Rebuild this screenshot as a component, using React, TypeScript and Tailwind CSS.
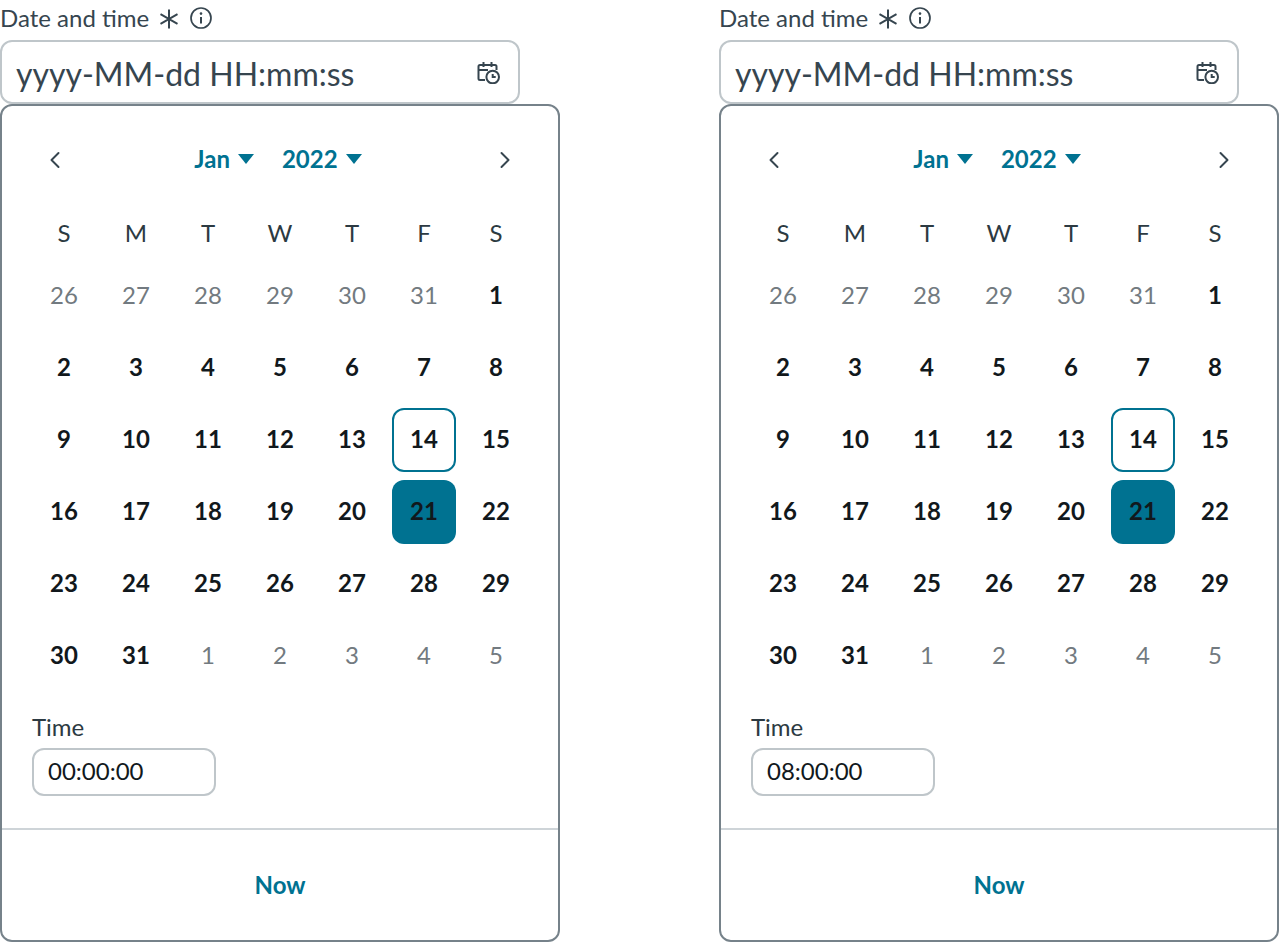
import { ChevronLeft, ChevronRight } from "lucide-react";

const weeks = [
  [26, 27, 28, 29, 30, 31, 1],
  [2, 3, 4, 5, 6, 7, 8],
  [9, 10, 11, 12, 13, 14, 15],
  [16, 17, 18, 19, 20, 21, 22],
  [23, 24, 25, 26, 27, 28, 29],
  [30, 31, 1, 2, 3, 4, 5],
];
const dayNames = ["S", "M", "T", "W", "T", "F", "S"];

function Caret() {
  return (
    <svg width="16" height="10" viewBox="0 0 16 10" className="ml-[8px] mb-[1px]">
      <path d="M0 0h16L8 10z" fill="#007291" />
    </svg>
  );
}

function InfoIcon() {
  return (
    <svg width="22" height="22" viewBox="0 0 22 22" fill="none" stroke="#36454f" strokeWidth="1.7">
      <circle cx="11" cy="11" r="10" />
      <path d="M11 10v6.5" strokeWidth="2" />
      <circle cx="11" cy="6.6" r="1.3" fill="#36454f" stroke="none" />
    </svg>
  );
}

function AsteriskIcon() {
  return (
    <svg width="20" height="20" viewBox="0 0 20 20" fill="none" stroke="#36454f" strokeWidth="2">
      <path d="M10 0.5v19M1.5 5.2l17 9.6M18.5 5.2l-17 9.6" />
    </svg>
  );
}

function CalendarClockIcon() {
  return (
    <svg width="24" height="24" viewBox="0 0 24 24" fill="none" stroke="#36454f" strokeWidth="2">
      <path d="M9 20H4a1.5 1.5 0 0 1-1.5-1.5V6.5A1.5 1.5 0 0 1 4 5h15a1.5 1.5 0 0 1 1.5 1.5V10" />
      <path d="M3 10h9M7.5 2v5M15.5 2v5" />
      <circle cx="16.7" cy="17" r="6.3" />
      <path d="M16.7 14v3h3" />
    </svg>
  );
}

function Picker({ time }: { time: string }) {
  return (
    <div className="w-[560px] shrink-0">
      <div className="flex h-10 items-center text-[24px] text-[#36454f]">
        <span className="pb-[4px]">Date and time</span>
        <span className="ml-[10px] mb-[3px]"><AsteriskIcon /></span>
        <span className="ml-[11px] mb-[5px]"><InfoIcon /></span>
      </div>
      <div className="flex h-[64px] w-[520px] items-center justify-between rounded-[12px] border-2 border-[#bfc6ca] bg-white pl-[14px] pr-[18px]">
        <span className="mt-[4px] text-[32px] text-[#36454f]">yyyy-MM-dd HH:mm:ss</span>
        <CalendarClockIcon />
      </div>
      <div className="flex h-[838px] w-[560px] flex-col rounded-[12px] border-2 border-[#76828a] bg-white">
        <div className="flex h-[108px] items-center justify-between px-[39px]">
          <ChevronLeft size={28} strokeWidth={1.7} color="#36454f" />
          <div className="mr-[4px] flex items-center pb-[2px] text-[24px] font-bold text-[#007291]">
            <span className="flex items-center">Jan<Caret /></span>
            <span className="ml-[28px] flex items-center">2022<Caret /></span>
          </div>
          <ChevronRight size={28} strokeWidth={1.7} color="#36454f" />
        </div>
        <div className="grid grid-cols-[repeat(7,72px)] px-[26px]">
          {dayNames.map((d, i) => (
            <div key={i} className="flex h-[38px] items-center justify-center text-[24px] text-[#2c3a42]">{d}</div>
          ))}
        </div>
        <div className="mt-[8px] grid grid-cols-[repeat(7,72px)] grid-rows-[repeat(6,72px)] px-[26px]">
          {weeks.map((week, w) =>
            week.map((n, i) => {
              const muted = (w === 0 && n > 7) || (w === 5 && n < 7);
              const outlined = w === 2 && n === 14;
              const selected = w === 3 && n === 21;
              return (
                <div key={`${w}-${i}`} className="flex items-center justify-center">
                  <div
                    className={`flex h-[64px] w-[64px] items-center justify-center rounded-[12px] pb-[2px] text-[24px] ${
                      muted ? "text-[#727a80]" : "font-bold text-[#11181c]"
                    } ${outlined ? "border-2 border-[#007291]" : ""} ${selected ? "bg-[#007291]" : ""}`}
                  >
                    {n}
                  </div>
                </div>
              );
            })
          )}
        </div>
        <div className="px-[30px] pt-[17px]">
          <div className="text-[24px] leading-[36px] text-[#2c3a42]">Time</div>
          <div className="mt-[3px] flex h-[48px] w-[184px] items-center rounded-[12px] border-2 border-[#bfc6ca] pb-[2px] pl-[14px] text-[24px] text-[#11181c]">
            {time}
          </div>
        </div>
        <div className="mt-[32px] border-t-2 border-[#ced4d8]" />
        <div className="flex flex-1 items-center justify-center text-[24px] font-bold text-[#007291]">Now</div>
      </div>
    </div>
  );
}

export default function App() {
  return (
    <div className="flex w-[1279px] justify-between bg-white font-['Lato',sans-serif]">
      <Picker time="00:00:00" />
      <Picker time="08:00:00" />
    </div>
  );
}
